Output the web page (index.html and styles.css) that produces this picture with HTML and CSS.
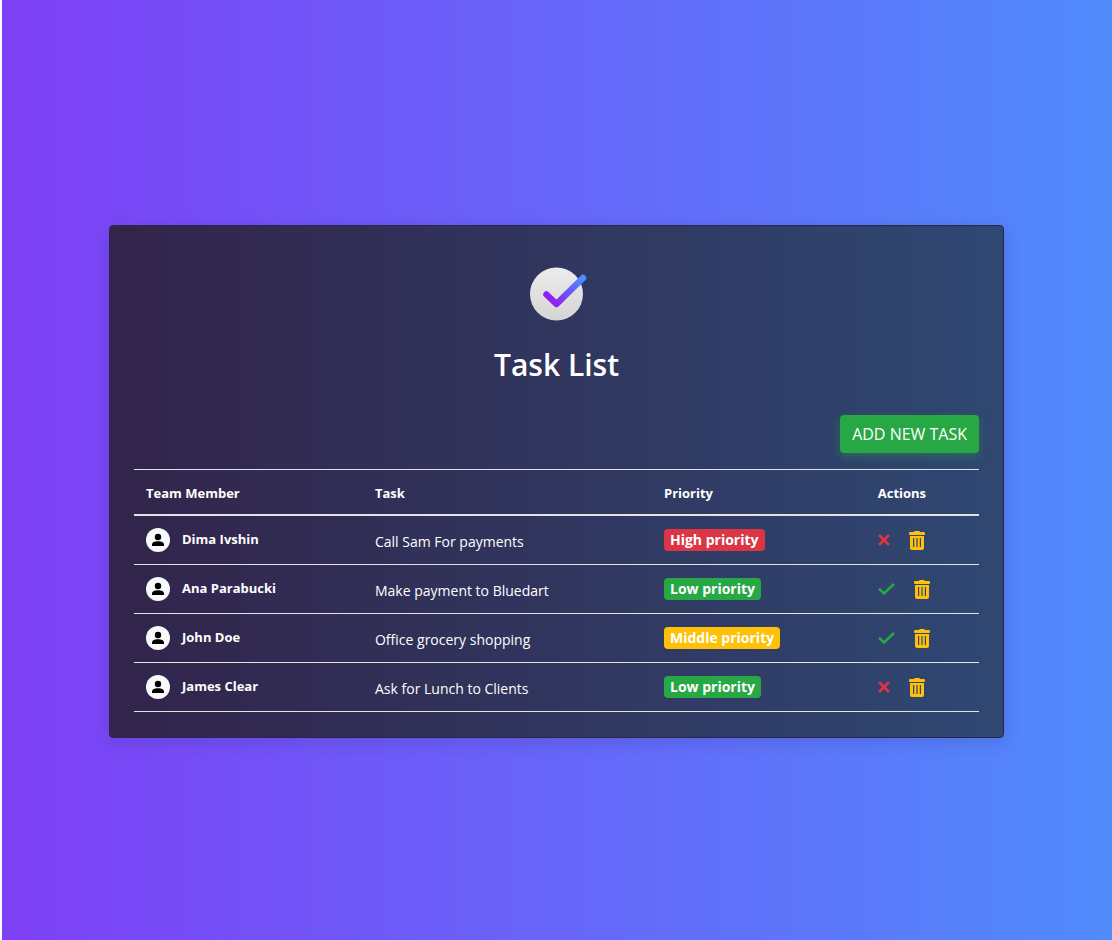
FILE: index.html
```html
<!DOCTYPE html>
<html lang="en">
<head>
<meta charset="utf-8">
<meta name="viewport" content="width=device-width, initial-scale=1">
<title>Task List</title>
<link rel="stylesheet" href="styles.css">
</head>
<body>
<svg class="sprite" aria-hidden="true">
  <symbol id="user" viewBox="0 0 24 24">
    <circle cx="12" cy="12" r="12" fill="#f8f9fa"/>
    <circle cx="12" cy="9" r="3.2"/>
    <path d="M6 18v-1.300C6 14.400 8.500 13.300 12 13.300s6 1.100 6 3.400V18z"/>
  </symbol>
  <symbol id="cross" viewBox="0 0 12 12"><path d="M1 1l10 10M11 1l-10 10" fill="none" stroke="currentColor" stroke-width="2.600"/></symbol>
  <symbol id="check" viewBox="0 0 17 12"><path d="M1 5.800l5 4.600L16 1" fill="none" stroke="currentColor" stroke-width="2.600"/></symbol>
  <symbol id="trash" viewBox="0 0 16 19">
    <path fill="currentColor" fill-rule="evenodd" d="M5 1q.2-1 1.200-1h3.600q1 0 1.200 1h4q1 0 1 1v1q0 1-1 1H1Q0 4 0 3V2q0-1 1-1zM1 5h14v12q0 2-2 2H3q-2 0-2-2zM4 7v9h1.200V7zM7.400 7v9h1.200V7zM10.800 7v9h1.200V7z"/>
  </symbol>
</svg>
<main class="page">
  <section class="card">
    <header class="heading">
      <svg class="logo" viewBox="0 0 60 60" aria-hidden="true">
        <defs>
          <linearGradient id="disc" x1="0" y1="0" x2="0" y2="1"><stop offset="0" stop-color="#ececec"/><stop offset="1" stop-color="#d5d5d5"/></linearGradient>
          <linearGradient id="tick" gradientUnits="userSpaceOnUse" x1="30" y1="42" x2="55" y2="14"><stop offset="0" stop-color="#9020ee"/><stop offset="1" stop-color="#4a8dff"/></linearGradient>
        </defs>
        <circle cx="29.500" cy="30" r="26.500" fill="url(#disc)"/>
        <path d="M19.500 30.500L29.500 40 56 14" fill="none" stroke="url(#tick)" stroke-width="6.500" stroke-linecap="round" stroke-linejoin="round"/>
      </svg>
      <h1 class="title">Task List</h1>
    </header>
    <div class="toolbar"><button class="add" type="button">ADD NEW TASK</button></div>
    <table class="tasks">
      <thead><tr><th class="col-member" scope="col">Team Member</th><th class="col-task" scope="col">Task</th><th class="col-priority" scope="col">Priority</th><th scope="col">Actions</th></tr></thead>
      <tbody>
        <tr>
          <th scope="row"><div class="member"><svg class="avatar" aria-hidden="true"><use href="#user"/></svg><span class="name">Dima Ivshin</span></div></th>
          <td class="task">Call Sam For payments</td>
          <td><span class="badge high">High priority</span></td>
          <td><div class="actions"><button class="action red" type="button" aria-label="Not done"><svg class="cross"><use href="#cross"/></svg></button><button class="action yellow" type="button" aria-label="Remove"><svg class="trash"><use href="#trash"/></svg></button></div></td>
        </tr>
        <tr>
          <th scope="row"><div class="member"><svg class="avatar" aria-hidden="true"><use href="#user"/></svg><span class="name">Ana Parabucki</span></div></th>
          <td class="task">Make payment to Bluedart</td>
          <td><span class="badge low">Low priority</span></td>
          <td><div class="actions"><button class="action green" type="button" aria-label="Done"><svg class="check"><use href="#check"/></svg></button><button class="action yellow" type="button" aria-label="Remove"><svg class="trash"><use href="#trash"/></svg></button></div></td>
        </tr>
        <tr>
          <th scope="row"><div class="member"><svg class="avatar" aria-hidden="true"><use href="#user"/></svg><span class="name">John Doe</span></div></th>
          <td class="task">Office grocery shopping</td>
          <td><span class="badge middle">Middle priority</span></td>
          <td><div class="actions"><button class="action green" type="button" aria-label="Done"><svg class="check"><use href="#check"/></svg></button><button class="action yellow" type="button" aria-label="Remove"><svg class="trash"><use href="#trash"/></svg></button></div></td>
        </tr>
        <tr>
          <th scope="row"><div class="member"><svg class="avatar" aria-hidden="true"><use href="#user"/></svg><span class="name">James Clear</span></div></th>
          <td class="task">Ask for Lunch to Clients</td>
          <td><span class="badge low">Low priority</span></td>
          <td><div class="actions"><button class="action red" type="button" aria-label="Not done"><svg class="cross"><use href="#cross"/></svg></button><button class="action yellow" type="button" aria-label="Remove"><svg class="trash"><use href="#trash"/></svg></button></div></td>
        </tr>
      </tbody>
    </table>
  </section>
</main>
</body>
</html>
```

FILE: styles.css
```css
* { box-sizing: border-box; }
body {
  margin: 0;
  font-family: "Open Sans", "Noto Sans", sans-serif;
  font-size: 14px;
  line-height: 20px;
  color: #fff;
}
.sprite { position: absolute; width: 0; height: 0; }
.page {
  min-height: 100vh;
  display: flex;
  align-items: center;
  justify-content: center;
  padding: 47px 25px 24px 24px;
  border-left: 2px solid #fff;
  background: linear-gradient(to right, #7e40f6, #508bfc);
}
.card {
  width: 100%;
  max-width: 895px;
  padding: 24px 24px 25px;
  border: 1px solid #29264a;
  border-radius: 4px;
  background: linear-gradient(to right, #32244b, #2f4872);
  box-shadow: 0 4px 16px rgba(40, 40, 120, 0.2);
}
.heading {
  display: flex;
  flex-direction: column;
  align-items: center;
  gap: 21px;
  padding: 14px 0 31px;
}
.logo { width: 60px; height: 60px; }
.title { margin: 0; font-size: 30px; line-height: 39px; font-weight: 600; }
.toolbar { display: flex; justify-content: flex-end; margin-bottom: 16px; }
.add {
  height: 38px;
  padding: 0 12px;
  border: 0;
  border-radius: 4px;
  background: #28a745;
  color: #fff;
  font: inherit;
  font-size: 16px;
  box-shadow: 0 3px 8px rgba(40, 167, 69, 0.4);
}
.tasks { width: 100%; table-layout: fixed; border-collapse: separate; border-spacing: 0; border-top: 1px solid #dee2e6; }
.tasks th, .tasks td {
  height: 49px;
  padding: 0 12px;
  border-bottom: 1px solid #e3e3e3;
  text-align: left;
  vertical-align: middle;
}
.tasks th { font-size: 13px; font-weight: 700; }
.tasks thead th { height: 46px; padding-top: 2px; border-bottom-width: 2px; }
.col-member { width: 27.1%; }
.col-task { width: 34.2%; }
.col-priority { width: 25.3%; }
.tasks .task { padding-top: 3px; }
.member { display: flex; align-items: center; gap: 12px; }
.name { padding-bottom: 2px; }
.avatar { width: 24px; height: 24px; }
.badge {
  display: inline-block;
  padding: 0 6px;
  border-radius: 4px;
  font-weight: 700;
  line-height: 22px;
}
.high { background: #dc3545; }
.low { background: #28a745; }
.middle { background: #ffc107; }
.actions { display: flex; align-items: center; gap: 19px; }
.action { display: flex; padding: 0; border: 0; background: none; }
.red { color: #dc3545; }
.green { color: #28a745; }
.yellow { color: #ffc107; }
.cross { width: 12px; height: 12px; }
.check { width: 17px; height: 12px; }
.trash { width: 16px; height: 19px; }
```
